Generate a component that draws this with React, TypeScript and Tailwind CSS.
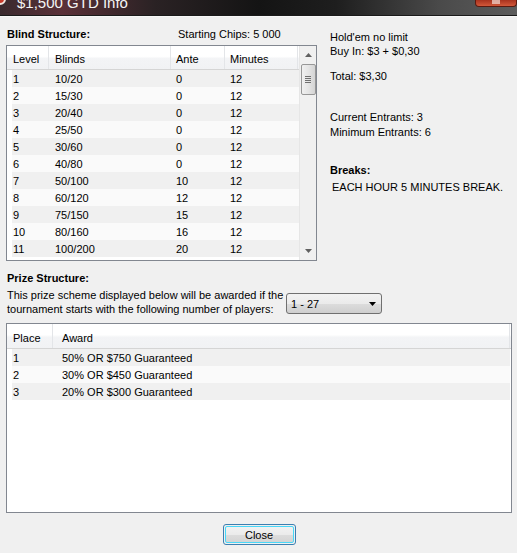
import React from "react";

const blinds = [
  ["1", "10/20", "0", "12"],
  ["2", "15/30", "0", "12"],
  ["3", "20/40", "0", "12"],
  ["4", "25/50", "0", "12"],
  ["5", "30/60", "0", "12"],
  ["6", "40/80", "0", "12"],
  ["7", "50/100", "10", "12"],
  ["8", "60/120", "12", "12"],
  ["9", "75/150", "15", "12"],
  ["10", "80/160", "16", "12"],
  ["11", "100/200", "20", "12"],
];

const prizes = [
  ["1", "50% OR $750 Guaranteed"],
  ["2", "30% OR $450 Guaranteed"],
  ["3", "20% OR $300 Guaranteed"],
];

export default function App() {
  return (
    <div
      className="w-[517px] h-[553px] overflow-hidden bg-[#f0f0f0] text-[11px] leading-[14px] text-black flex flex-col"
      style={{ fontFamily: '"Liberation Sans", Arial, sans-serif' }}
    >
      {/* Title bar */}
      <div className="relative h-[16px] shrink-0 bg-[linear-gradient(90deg,#3a2a2e_0%,#5a3038_12%,#2a2224_30%,#141414_50%,#1e1e1e_65%,#4a4a4a_85%,#5c5c5c_100%)] border-b border-[#1a1a1a] flex items-start overflow-hidden">
        <div className="ml-[-6px] mt-[-7px] w-[12px] h-[12px] rounded-full bg-[#c83a2a] border-2 border-[#f0e6e0]" />
        <div className="ml-[11px] mt-[-6px] text-[15px] leading-[18px] text-[#f4f4f4]">
          $1,500 GTD Info
        </div>
        <div className="absolute right-0 top-0 w-[42px] h-[7px] rounded-b-[4px] bg-[linear-gradient(180deg,#a8321e,#d2583a)] border border-t-0 border-[#5a1a10] flex justify-center">
          <div className="w-[8px] h-[4px] bg-[#f5e0d8] opacity-70" />
        </div>
      </div>
      <div className="h-px bg-[#f8f8f8] shrink-0" />

      {/* Top section */}
      <div className="flex pl-[6px] pt-[10px]">
        {/* Left column */}
        <div className="w-[311px] flex flex-col">
          <div className="flex h-[14px] pl-[1px]">
            <span className="font-bold w-[171px]">Blind Structure:</span>
            <span>Starting Chips: 5 000</span>
          </div>
          <div className="mt-[4px] h-[216px] border border-[#828790] bg-white flex">
            <div className="w-[292px] flex flex-col">
              {/* header */}
              <div className="h-[24px] flex border-b border-[#d5d5d5] bg-[linear-gradient(180deg,#ffffff_0%,#ffffff_45%,#f3f4f6_55%,#f1f2f4_100%)]">
                <div className="w-[42px] pl-[6px] pt-[6px] border-r border-[#e3e5e8]">Level</div>
                <div className="w-[122px] pl-[6px] pt-[6px] border-r border-[#e3e5e8]">Blinds</div>
                <div className="w-[54px] pl-[5px] pt-[6px] border-r border-[#e3e5e8]">Ante</div>
                <div className="w-[73px] pl-[5px] pt-[6px] border-r border-[#e3e5e8]">Minutes</div>
              </div>
              {blinds.map((r, i) => (
                <div
                  key={i}
                  className={`ml-[5px] h-[17px] flex items-center ${i % 2 === 0 ? "bg-[#f0f0f0]" : "bg-[#fafafa]"}`}
                >
                  <div className="w-[37px] pl-[1px]">{r[0]}</div>
                  <div className="w-[122px] pl-[6px]">{r[1]}</div>
                  <div className="w-[54px] pl-[5px]">{r[2]}</div>
                  <div className="w-[73px] pl-[5px]">{r[3]}</div>
                </div>
              ))}
            </div>
            {/* scrollbar */}
            <div className="w-[17px] bg-[#f0f0f0] border-l border-[#e6e6e6] flex flex-col items-center">
              <div className="h-[18px] flex items-center justify-center">
                <svg width="7" height="4" viewBox="0 0 7 4"><path d="M3.5 0 L7 4 L0 4 Z" fill="#606060" /></svg>
              </div>
              <div className="w-[15px] h-[31px] rounded-[2px] border border-[#979797] bg-[linear-gradient(90deg,#f0f0f0,#e4e4e4_50%,#d4d4d4)] flex flex-col items-center justify-center gap-[1px]">
                <div className="w-[6px] h-px bg-[#6f6f6f]" />
                <div className="w-[6px] h-px bg-[#6f6f6f]" />
                <div className="w-[6px] h-px bg-[#6f6f6f]" />
                <div className="w-[6px] h-px bg-[#6f6f6f]" />
              </div>
              <div className="flex-1" />
              <div className="h-[18px] flex items-center justify-center">
                <svg width="7" height="4" viewBox="0 0 7 4"><path d="M0 0 L7 0 L3.5 4 Z" fill="#606060" /></svg>
              </div>
            </div>
          </div>
        </div>

        {/* Right column */}
        <div className="ml-[13px] pt-[3px] flex flex-col">
          <div>Hold'em no limit</div>
          <div>Buy In: $3 + $0,30</div>
          <div className="mt-[11px]">Total: $3,30</div>
          <div className="mt-[27px]">Current Entrants: 3</div>
          <div className="mt-[1px]">Minimum Entrants: 6</div>
          <div className="mt-[24px] font-bold">Breaks:</div>
          <div className="mt-[3px] pl-[2px]">EACH HOUR 5 MINUTES BREAK.</div>
        </div>
      </div>

      {/* Prize structure */}
      <div className="pl-[7px] mt-[10px]">
        <div className="font-bold h-[14px]">Prize Structure:</div>
        <div className="flex mt-[3px]">
          <div className="w-[279px]">
            <div>This prize scheme displayed below will be awarded if the</div>
            <div>tournament starts with the following number of players:</div>
          </div>
          <div className="mt-[5px] w-[96px] h-[21px] rounded-[3px] border border-[#707070] bg-[linear-gradient(180deg,#f2f2f2_0%,#ebebeb_50%,#dddddd_51%,#cfcfcf_100%)] flex items-center pl-[4px] pr-[5px]">
            <span className="flex-1">1 - 27</span>
            <svg width="7" height="4" viewBox="0 0 7 4"><path d="M0 0 L7 0 L3.5 4 Z" fill="#000" /></svg>
          </div>
        </div>
      </div>

      <div className="ml-[6px] mt-[7px] w-[506px] h-[190px] border border-[#828790] bg-white flex flex-col">
        <div className="h-[25px] shrink-0 flex border-b border-[#d5d5d5] bg-[linear-gradient(180deg,#ffffff_0%,#ffffff_45%,#f3f4f6_55%,#f1f2f4_100%)]">
          <div className="w-[46px] pl-[6px] pt-[7px] border-r border-[#e3e5e8]">Place</div>
          <div className="w-[457px] pl-[9px] pt-[7px] border-r border-[#e3e5e8]">Award</div>
        </div>
        {prizes.map((p, i) => (
          <div
            key={i}
            className={`ml-[5px] mr-[1px] h-[17px] flex items-center ${i % 2 === 0 ? "bg-[#f0f0f0]" : "bg-[#fafafa]"}`}
          >
            <div className="w-[41px] pl-[1px]">{p[0]}</div>
            <div className="pl-[9px]">{p[1]}</div>
          </div>
        ))}
      </div>

      {/* Close */}
      <div className="flex justify-center mt-[11px] pl-[1px]">
        <div className="w-[73px] h-[21px] rounded-[3px] border border-[#3c7fb1] p-px">
          <div className="w-full h-full rounded-[2px] border border-[#48d8f8] bg-[linear-gradient(180deg,#f2f2f2_0%,#ebebeb_50%,#dddddd_51%,#d4d4d4_100%)] flex items-center justify-center">
            Close
          </div>
        </div>
      </div>
    </div>
  );
}
